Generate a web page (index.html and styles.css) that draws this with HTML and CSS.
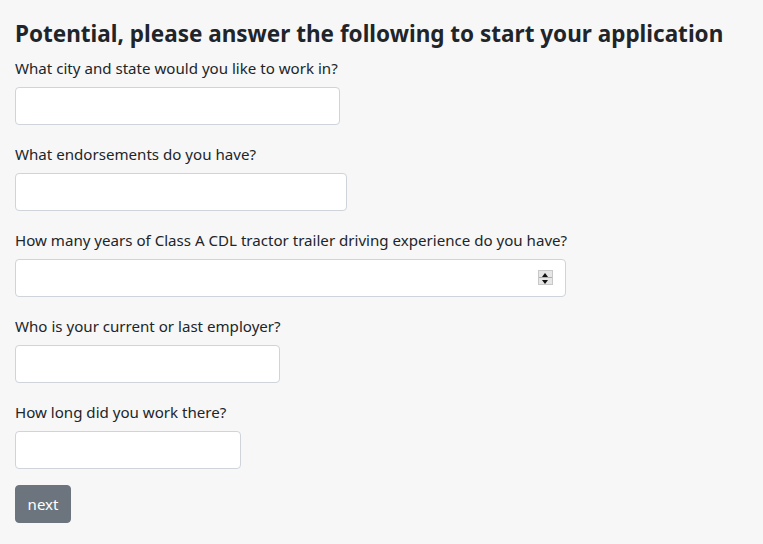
FILE: index.html
```html
<!DOCTYPE html>
<html lang="en">
<head>
<meta charset="utf-8">
<title>Application</title>
<link rel="stylesheet" href="styles.css">
</head>
<body>
<div class="page">
  <h1 class="title">Potential, please answer the following to start your application</h1>
  <form class="form">
    <div class="group">
      <label class="label" for="q1">What city and state would you like to work in?</label>
      <input class="field w1" id="q1" type="text">
    </div>
    <div class="group">
      <label class="label" for="q2">What endorsements do you have?</label>
      <input class="field w2" id="q2" type="text">
    </div>
    <div class="group">
      <label class="label" for="q3">How many years of Class A CDL tractor trailer driving experience do you have?</label>
      <div class="num-wrap w3">
        <input class="field full" id="q3" type="text" inputmode="numeric">
        <span class="spin"><span class="spin-up"></span><span class="spin-down"></span></span>
      </div>
    </div>
    <div class="group">
      <label class="label" for="q4">Who is your current or last employer?</label>
      <input class="field w4" id="q4" type="text">
    </div>
    <div class="group group-last">
      <label class="label" for="q5">How long did you work there?</label>
      <input class="field w5" id="q5" type="text">
    </div>
    <button class="btn" type="button">next</button>
  </form>
</div>
</body>
</html>
```

FILE: styles.css
```css
html, body {
  margin: 0;
  padding: 0;
  background: #f7f7f7;
}
body {
  font-family: "Noto Sans", "Open Sans", sans-serif;
  color: #212529;
  font-size: 15.1px;
  line-height: 24px;
}
.page {
  padding: 19px 15px 0 15px;
}
.title {
  margin: 0 0 8px 0;
  font-size: 22.5px;
  line-height: 29px;
  font-weight: 700;
}
.form {
  margin: 0;
}
.group {
  margin-bottom: 17px;
}
.group-last {
  margin-bottom: 16px;
}
.label {
  display: block;
  margin-bottom: 7px;
}
.field {
  display: block;
  box-sizing: border-box;
  height: 38px;
  padding: 6px 12px;
  font: inherit;
  background: #fff;
  border: 1px solid #ced4da;
  border-radius: 4px;
  outline: none;
}
.w1 { width: 325px; }
.w2 { width: 332px; }
.w3 { width: 551px; }
.w4 { width: 265px; }
.w5 { width: 226px; }
.full { width: 100%; }
.num-wrap {
  position: relative;
}
.spin {
  position: absolute;
  top: 11px;
  right: 13px;
  width: 15px;
  height: 15px;
  box-sizing: border-box;
  border: 1px solid #c8c8c8;
  background: #e6e6e6;
  display: flex;
  flex-direction: column;
}
.spin-up, .spin-down {
  flex: 1;
  position: relative;
}
.spin-up {
  border-bottom: 1px solid #b0b0b0;
}
.spin-up::after, .spin-down::after {
  content: "";
  position: absolute;
  left: 3px;
  width: 0;
  height: 0;
  border-left: 3.5px solid transparent;
  border-right: 3.5px solid transparent;
}
.spin-up::after {
  top: 2px;
  border-bottom: 4px solid #111;
}
.spin-down::after {
  top: 2px;
  border-top: 4px solid #111;
}
.btn {
  display: block;
  height: 38px;
  width: 56px;
  padding: 6px 0;
  font: inherit;
  font-size: 15px;
  text-align: center;
  color: #fff;
  background: #6c757d;
  border: 1px solid #6c757d;
  border-radius: 4px;
}
```
